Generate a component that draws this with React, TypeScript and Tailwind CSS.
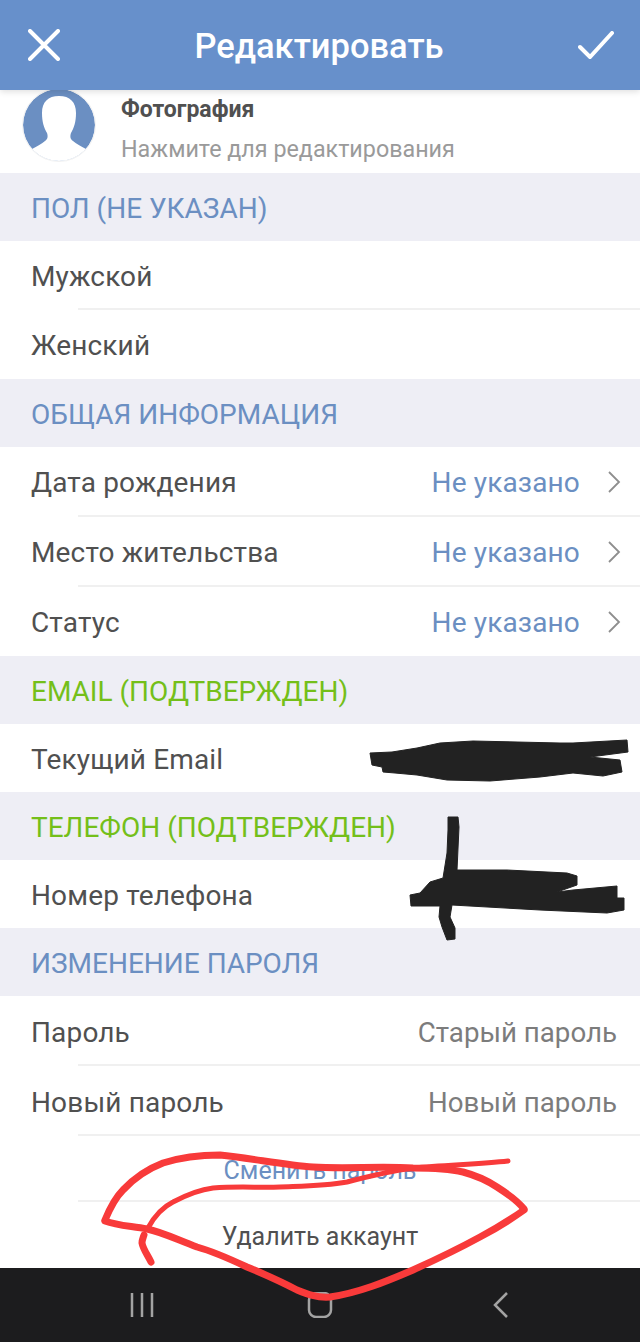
const BLUE = "text-[#6b8fc2]";

function Section({ title, green = false }: { title: string; green?: boolean }) {
  return (
    <div className={`h-[68px] flex items-center pl-[31px] pt-1 bg-[#eeeef5] text-[28px] ${green ? "text-[#74bf1a]" : BLUE}`}>
      {title}
    </div>
  );
}

function Row({
  label,
  value,
  link = false,
  chevron = false,
  border = true,
  h = "h-[70px]",
}: {
  label: string;
  value?: string;
  link?: boolean;
  chevron?: boolean;
  border?: boolean;
  h?: string;
}) {
  return (
    <div className={`relative flex items-center justify-between pl-[31px] pr-[23px] ${h}`}>
      <span className="text-[28px] tracking-[0.15px] text-[#505050] pt-[3px]">{label}</span>
      {value ? (
        <span className="flex items-center">
          <span className={`pt-[3px] ${link ? `text-[28px] tracking-[0.15px] ${BLUE}` : "text-[27.7px] text-[#7c7c7c]"}`}>{value}</span>
          {chevron ? (
            <svg width="14" height="24" viewBox="0 0 14 24" fill="none" className="ml-[27px] mr-[-4px]">
              <path d="M2 2l10 10L2 22" stroke="#8e8e8e" strokeWidth="1.8" />
            </svg>
          ) : null}
        </span>
      ) : null}
      {border ? <div className="absolute bottom-0 left-[78px] right-0 h-[2px] bg-[#f0f0f0]" /> : null}
    </div>
  );
}

function Avatar() {
  return (
    <div className="w-[74px] h-[74px] mt-[-2px] rounded-full overflow-hidden border border-[#f2f2f2] bg-white">
      <svg width="72" height="72" viewBox="0 0 72 72">
        <circle cx="36" cy="36" r="36" fill="#6b8fc2" />
        <path
          d="M36 7c-11 0-17 6-17 17 0 9 2 15 5 20 1 3 1 6-2 8-3 3-8 5-13 8v12h54V60c-5-3-10-5-13-8-3-2-3-5-2-8 3-5 5-11 5-20 0-11-6-17-17-17z"
          fill="#fff"
        />
      </svg>
    </div>
  );
}

function Scribbles() {
  return (
    <svg className="absolute inset-0 pointer-events-none" width="640" height="1342" viewBox="0 0 640 1342" fill="none">
      {/* black marker over email and phone */}
      <path
        d="M370 753L392 752 417 748 440 743 473 741 560 743 573 743 627 740 628 752 590 757 620 760 622 772 603 776 573 773 540 777 490 781 447 780 417 775 395 773 383 772 382 767 372 765z"
        fill="#222"
        stroke="#222"
        strokeLinejoin="round"
      />
      <path
        d="M448 817L458 817 459 827 457 870 507 870 567 873 577 876 577 885 557 892 573 890 617 886 617 898 624 898 624 910 607 913 540 910 452 905 450 917 455 928 455 939 447 940 442 927 439 917 440 906 411 906 410 895 420 893 430 882 443 878 447 853 448 830z"
        fill="#222"
        stroke="#222"
        strokeLinejoin="round"
      />
      {/* red circle around delete button */}
      <g stroke="#f83a3a" strokeLinecap="round" strokeLinejoin="round">
        <path d="M148 1228C155 1215 163 1207 173 1202 190 1193 205 1189 213 1188 240 1186 260 1188 280 1187 305 1186 325 1186 347 1182 370 1176 390 1171 413 1168 445 1165 480 1164 508 1161" strokeWidth="5" />
        <path d="M151 1262C147 1254 143 1249 142 1243 142 1240 143 1238 144 1235" strokeWidth="7" />
        <path d="M105 1220C110 1208 115 1198 123 1190 136 1176 150 1168 163 1163 185 1156 205 1155 220 1155 250 1158 285 1165 313 1167 345 1169 380 1166 413 1168 435 1168 450 1169 463 1172 478 1176 488 1181 497 1187 508 1194 517 1200 524 1209" strokeWidth="7" />
        <path d="M524 1210C510 1220 497 1228 480 1237 458 1249 435 1260 413 1270 385 1282 358 1293 330 1297 317 1298 307 1294 297 1290 278 1280 264 1274 247 1267 230 1259 215 1252 197 1247 178 1240 162 1232 147 1229 132 1226 118 1226 105 1221" strokeWidth="7" />
      </g>
    </svg>
  );
}

export default function App() {
  return (
    <div className="relative w-[640px] h-[1342px] overflow-hidden bg-white flex flex-col font-['Roboto',sans-serif]">
      <div className="relative z-10 h-[90px] shrink-0 flex items-center justify-between px-[28px] bg-[#6790cb] shadow-[0_2px_6px_rgba(0,0,0,0.12)]">
        <svg width="32" height="32" viewBox="0 0 32 32" fill="none" stroke="#fff" strokeWidth="4" strokeLinecap="round">
          <path d="M2 2l28 28M30 2L2 30" />
        </svg>
        <span className="text-[34.5px] font-medium text-white pt-[4px]">Редактировать</span>
        <svg width="36" height="28" viewBox="0 0 36 28" fill="none" stroke="#fff" strokeWidth="4" strokeLinecap="round" className="mr-[-2px]">
          <path d="M2 16l10 10L34 2" />
        </svg>
      </div>

      <div className="h-[83px] shrink-0 flex items-start pl-[22px] overflow-hidden">
        <Avatar />
        <div className="ml-[25px] flex flex-col">
          <span className="text-[23px] leading-[28px] mt-[6px] font-bold text-[#505050]">Фотография</span>
          <span className="text-[23.3px] leading-[28px] mt-[11px] text-[#9a9a9a]">Нажмите для редактирования</span>
        </div>
      </div>

      <Section title="ПОЛ (НЕ УКАЗАН)" />
      <Row label="Мужской" h="h-[69px]" />
      <Row label="Женский" border={false} h="h-[69px]" />

      <Section title="ОБЩАЯ ИНФОРМАЦИЯ" />
      <Row label="Дата рождения" value="Не указано" link chevron />
      <Row label="Место жительства" value="Не указано" link chevron />
      <Row label="Статус" value="Не указано" link chevron border={false} />

      <Section title="EMAIL (ПОДТВЕРЖДЕН)" green />
      <Row label="Текущий Email" border={false} h="h-[68px]" />

      <Section title="ТЕЛЕФОН (ПОДТВЕРЖДЕН)" green />
      <Row label="Номер телефона" border={false} h="h-[68px]" />

      <Section title="ИЗМЕНЕНИЕ ПАРОЛЯ" />
      <Row label="Пароль" value="Старый пароль" />
      <Row label="Новый пароль" value="Новый пароль" />

      <div className="relative h-[66px] shrink-0 flex items-center justify-center pt-1 text-[25px] text-[#6b8fc2]">
        Сменить пароль
        <div className="absolute bottom-0 left-[78px] right-0 h-[2px] bg-[#f0f0f0]" />
      </div>
      <div className="h-[66px] shrink-0 flex items-center justify-center pt-1 text-[25px] text-[#505050]">Удалить аккаунт</div>

      <div className="h-[74px] shrink-0 flex items-center justify-between bg-[#1c1c1e] pl-[130px] pr-[131px]">
        <svg width="24" height="24" viewBox="0 0 24 24" stroke="#a3a3a3" strokeWidth="2.5">
          <path d="M2 0v24M12 0v24M22 0v24" />
        </svg>
        <svg width="26" height="26" viewBox="0 0 26 26" fill="none" stroke="#a3a3a3" strokeWidth="2.5" className="mr-[8px]">
          <rect x="2" y="1" width="22" height="24" rx="7" />
        </svg>
        <svg width="16" height="26" viewBox="0 0 16 26" fill="none" stroke="#a3a3a3" strokeWidth="2.5">
          <path d="M14 1L2 13l12 12" />
        </svg>
      </div>

      <Scribbles />
    </div>
  );
}
